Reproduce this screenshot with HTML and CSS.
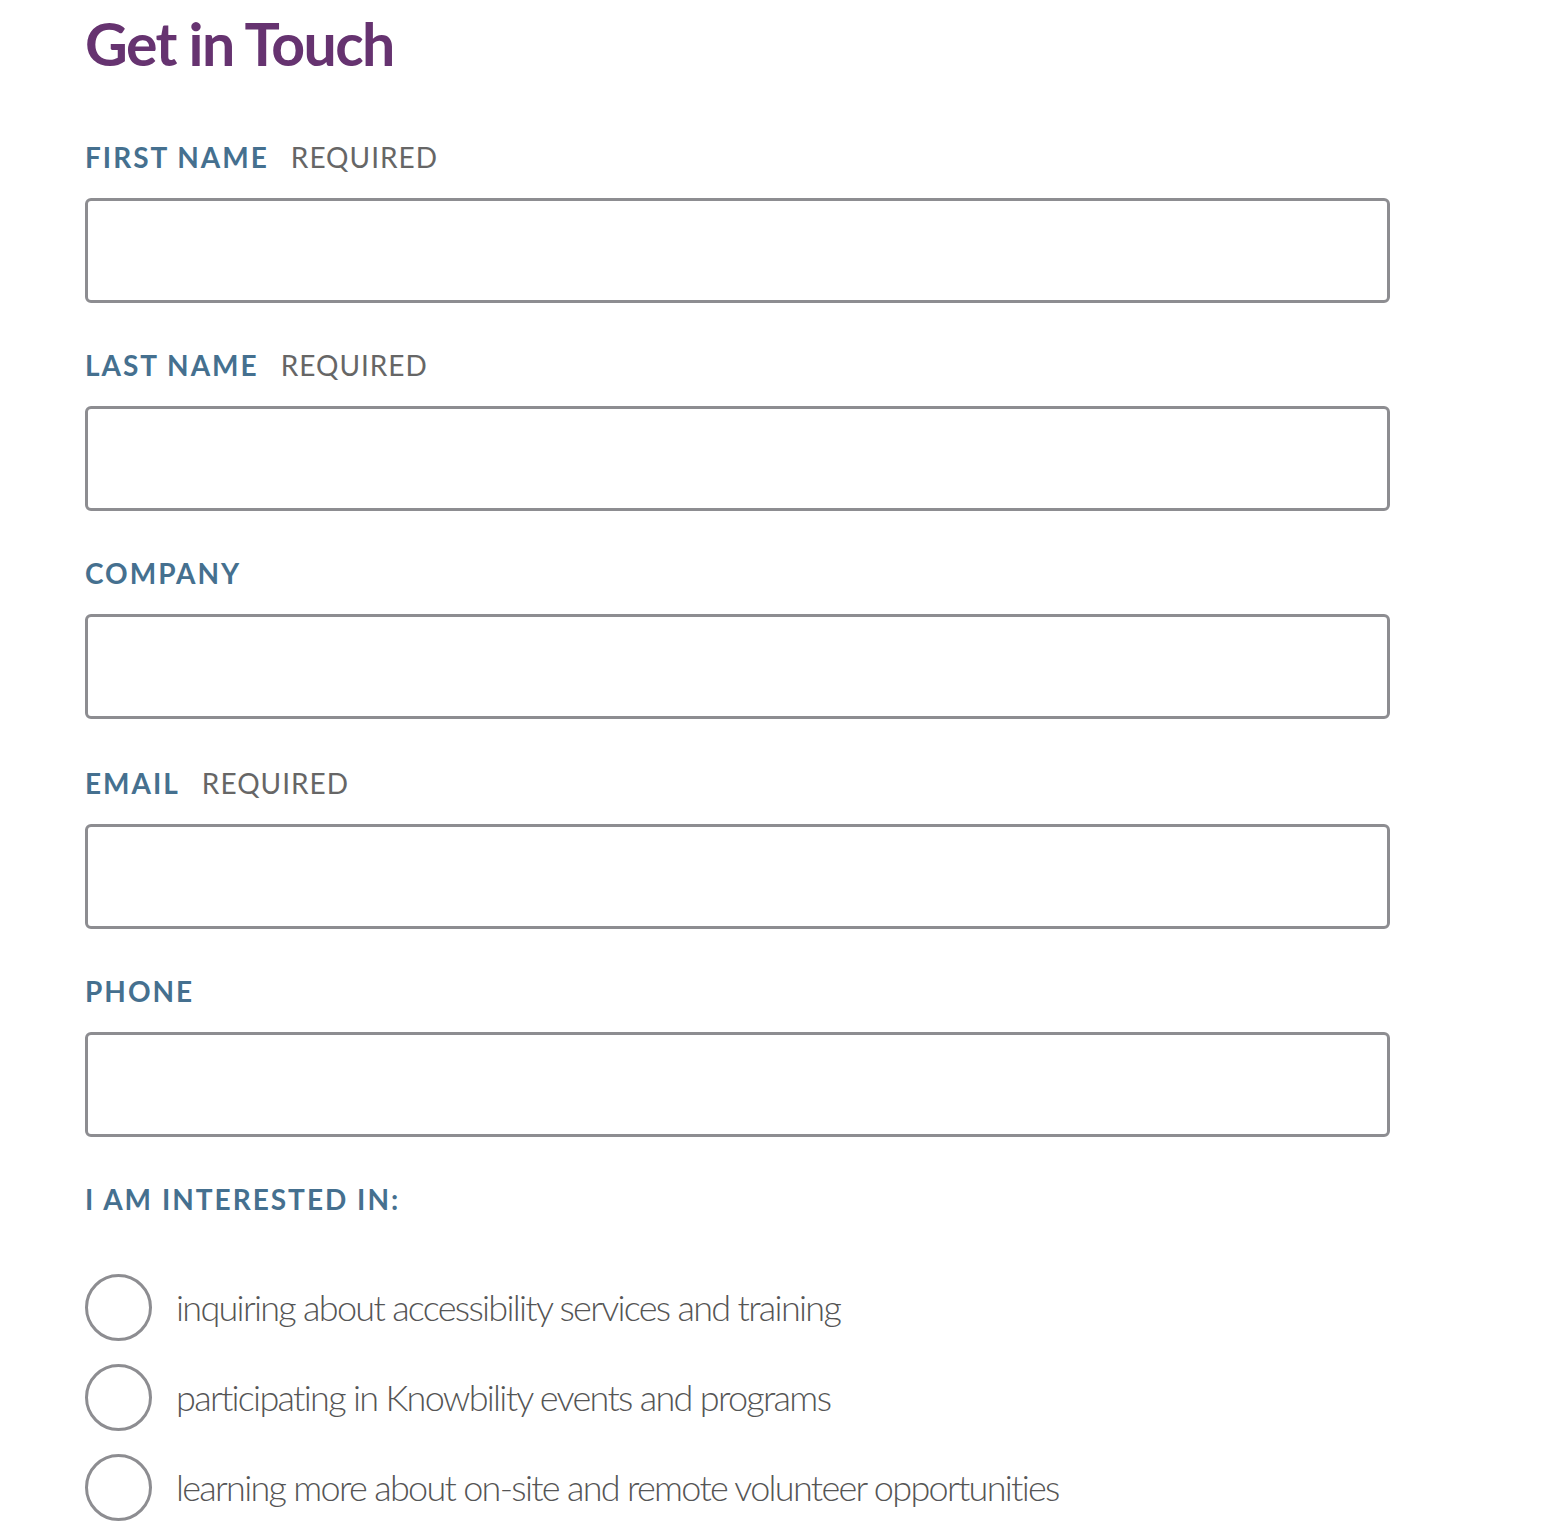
FILE: index.html
```html
<!DOCTYPE html>
<html lang="en">
<head>
<meta charset="utf-8">
<title>Get in Touch</title>
<link rel="stylesheet" href="styles.css">
</head>
<body>
<main class="page">
  <h1 class="title">Get in Touch</h1>
  <form class="form">
    <div class="field">
      <label class="label" for="fn"><span class="name">First Name</span><span class="req">Required</span></label>
      <input class="input" id="fn" type="text">
    </div>
    <div class="field">
      <label class="label" for="ln"><span class="name">Last Name</span><span class="req">Required</span></label>
      <input class="input" id="ln" type="text">
    </div>
    <div class="field">
      <label class="label" for="co"><span class="name">Company</span></label>
      <input class="input" id="co" type="text">
    </div>
    <div class="field">
      <label class="label" for="em"><span class="name">Email</span><span class="req">Required</span></label>
      <input class="input" id="em" type="email">
    </div>
    <div class="field">
      <label class="label" for="ph"><span class="name">Phone</span></label>
      <input class="input" id="ph" type="tel">
    </div>
    <fieldset class="group">
      <legend class="label"><span class="name">I am interested in:</span></legend>
      <label class="option"><input class="radio" type="radio" name="interest"><span>inquiring about accessibility services and training</span></label>
      <label class="option"><input class="radio" type="radio" name="interest"><span>participating in Knowbility events and programs</span></label>
      <label class="option"><input class="radio" type="radio" name="interest"><span>learning more about on-site and remote volunteer opportunities</span></label>
    </fieldset>
  </form>
</main>
</body>
</html>
```
FILE: styles.css
```css
* { box-sizing: border-box; }
html, body { margin: 0; padding: 0; background: #fff; }
body { font-family: "Lato", "Open Sans", sans-serif; }
.page { padding: 8px 0 0 85px; width: 1390px; }
.title {
  margin: 0;
  font-family: "Lato", sans-serif;
  font-weight: bold;
  font-size: 59px;
  line-height: 72px;
  letter-spacing: -1.6px;
  color: #663370;
}
.form { display: flex; flex-direction: column; margin-top: 58px; }
.field { display: flex; flex-direction: column; margin-bottom: 43px; }
.field:nth-child(4) { margin-top: 2px; }
.label {
  display: flex;
  align-items: baseline;
  gap: 22px;
  height: 60px;
  padding-top: 2px;
  font-size: 28px;
  text-transform: uppercase;
}
.name { font-weight: bold; color: #45708f; letter-spacing: 2px; }
.req { font-weight: 400; color: #666; letter-spacing: 1px; }
.input {
  display: block;
  width: 1305px;
  height: 105px;
  border: 3px solid #8d8d91;
  border-radius: 6px;
  background: #fff;
  margin: 0;
}
.group { border: 0; margin: 0; padding: 0; display: flex; flex-direction: column; }
.group .label { padding: 2px 0 0; float: left; width: 100%; margin-bottom: 22px; }
.option {
  display: flex;
  align-items: center;
  gap: 24px;
  height: 90px;
  font-size: 36px;
  font-weight: 300;
  color: #555;
  letter-spacing: -1.7px;
}
.radio {
  appearance: none;
  -webkit-appearance: none;
  margin: 0;
  width: 67px;
  height: 67px;
  border: 3px solid #8d8d91;
  border-radius: 50%;
  background: #fff;
  flex: none;
}
```
